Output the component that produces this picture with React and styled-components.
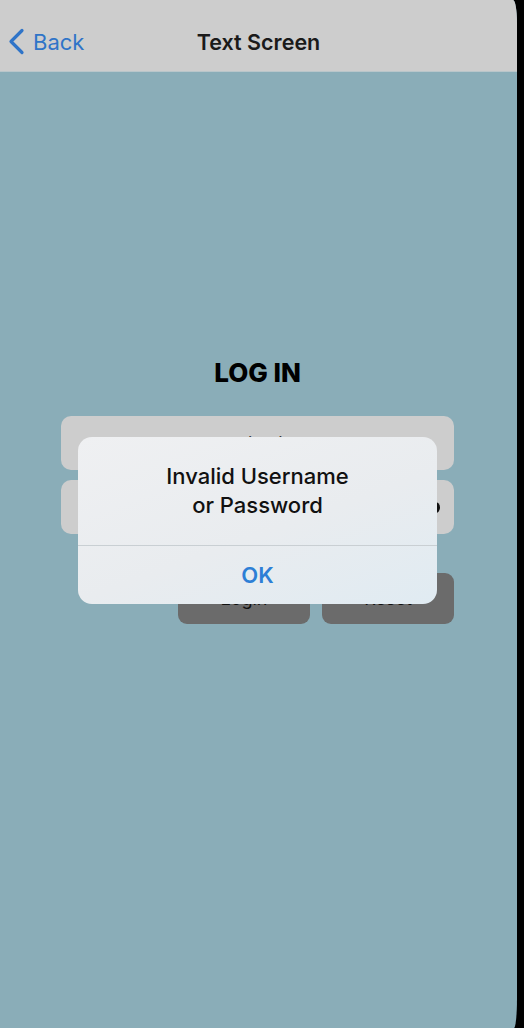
import React from "react";
import styled, { createGlobalStyle } from "styled-components";

const GlobalStyle = createGlobalStyle`
  html, body {
    margin: 0;
    padding: 0;
    background: #000;
  }
  body {
    font-family: "Inter", "Liberation Sans", sans-serif;
  }
`;

function App() {
  return (
    <>
      <GlobalStyle />
      <Screen>
        <Header>
          <BackButton>
            <svg width="17" height="27" viewBox="0 0 17 27">
              <path
                d="M14 2.5 L3 13.5 L14 24.5"
                fill="none"
                stroke="#2f74c8"
                strokeWidth="3.2"
                strokeLinecap="round"
                strokeLinejoin="round"
              />
            </svg>
            <span>Back</span>
          </BackButton>
          <HeaderTitle>Text Screen</HeaderTitle>
          <div />
        </Header>
        <Body>
          <Form>
            <Heading>LOG IN</Heading>
            <Field>miami</Field>
            <Field>
              <FieldIcon />
            </Field>
            <ButtonRow>
              <ActionButton>Login</ActionButton>
              <ActionButton>Reset</ActionButton>
            </ButtonRow>
          </Form>
        </Body>
        <Overlay>
          <Alert>
            <AlertMessage>
              Invalid Username
              <br />
              or Password
            </AlertMessage>
            <AlertAction>OK</AlertAction>
          </Alert>
        </Overlay>
      </Screen>
    </>
  );
}

const Screen = styled.div`
  position: relative;
  width: 517px;
  height: 1028px;
  background-color: #8aadb8;
  border-top-right-radius: 4px 24px;
  border-bottom-right-radius: 3px 30px;
  overflow: hidden;
  display: flex;
  flex-direction: column;
`;

const Header = styled.div`
  height: 72px;
  flex-shrink: 0;
  box-sizing: border-box;
  padding-top: 12px;
  background-color: #cdcdcd;
  border-bottom: 1px solid #b9c6ca;
  display: grid;
  grid-template-columns: 1fr auto 1fr;
  align-items: center;
`;

const BackButton = styled.div`
  display: flex;
  align-items: center;
  gap: 8px;
  padding-left: 8px;
  color: #2f74c8;
  font-size: 22px;
  cursor: pointer;
`;

const HeaderTitle = styled.div`
  font-size: 21.5px;
  font-weight: 600;
  color: #1a1a1a;
`;

const Body = styled.div`
  flex: 1;
  display: flex;
  justify-content: center;
  padding-top: 286px;
  padding-right: 2px;
`;

const Form = styled.div`
  width: 393px;
  display: flex;
  flex-direction: column;
  align-items: stretch;
`;

const Heading = styled.h1`
  margin: 0 0 28px;
  text-align: center;
  font-size: 26px;
  line-height: 30px;
  font-weight: 800;
  color: #000;
`;

const Field = styled.div`
  position: relative;
  height: 54px;
  margin-bottom: 10px;
  border-radius: 10px;
  background-color: #cdcdcd;
  display: flex;
  align-items: center;
  justify-content: center;
  font-size: 18px;
  color: #000;
`;

const FieldIcon = styled.span`
  position: absolute;
  right: 14px;
  top: 22px;
  width: 9px;
  height: 11px;
  border-radius: 50%;
  background: #111;
`;

const ButtonRow = styled.div`
  display: flex;
  justify-content: flex-end;
  gap: 12px;
  margin-top: 29px;
`;

const ActionButton = styled.div`
  width: 132px;
  height: 51px;
  border-radius: 9px;
  background-color: #6b6b6b;
  display: flex;
  align-items: center;
  justify-content: center;
  font-size: 18px;
  color: #111;
`;

const Overlay = styled.div`
  position: absolute;
  inset: 0;
  display: flex;
  justify-content: center;
  align-items: flex-start;
  padding-top: 437px;
  padding-right: 2px;
`;

const Alert = styled.div`
  width: 359px;
  height: 167px;
  border-radius: 14px;
  background: linear-gradient(160deg, #eff0f2 0%, #e9ecef 55%, #e0ebf2 100%);
  display: flex;
  flex-direction: column;
  overflow: hidden;
`;

const AlertMessage = styled.div`
  flex: 1;
  padding-top: 25px;
  text-align: center;
  font-size: 22px;
  line-height: 29px;
  font-weight: 500;
  color: #111;
  border-bottom: 1px solid #c9cfd3;
`;

const AlertAction = styled.div`
  height: 58px;
  display: flex;
  align-items: center;
  justify-content: center;
  font-size: 22px;
  font-weight: 600;
  color: #2d7fd6;
`;

export default App;
